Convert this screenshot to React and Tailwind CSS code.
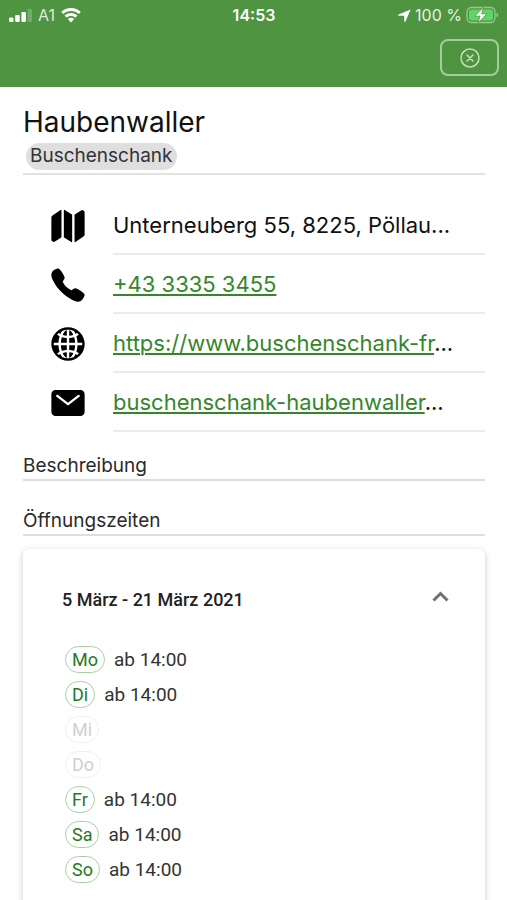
import { IoMap, IoCall, IoGlobe, IoMail, IoCloseCircleOutline } from 'react-icons/io5'

const contacts = [
  { icon: IoMap, label: 'Adresse', text: 'Unterneuberg 55, 8225, Pöllau', more: true },
  { icon: IoCall, label: 'Telefon', text: '+43 3335 3455', href: 'tel:+4333353455' },
  { icon: IoGlobe, label: 'Webseite', text: 'https://www.buschenschank-fr', href: '#web', more: true },
  { icon: IoMail, label: 'E-Mail', text: 'buschenschank-haubenwaller', href: '#mail', more: true }
]

const days = [
  { day: 'Mo', hours: 'ab 14:00' },
  { day: 'Di', hours: 'ab 14:00' },
  { day: 'Mi' },
  { day: 'Do' },
  { day: 'Fr', hours: 'ab 14:00' },
  { day: 'Sa', hours: 'ab 14:00' },
  { day: 'So', hours: 'ab 14:00' }
]

function StatusBar() {
  return (
    <div className="grid grid-cols-3 items-center h-[30px] pl-[9px] pr-2 text-base">
      <div className="flex items-center gap-[6px]">
        <svg width="23" height="13" viewBox="0 0 23 13" fill="#fff">
          <rect x="0" y="8.500" width="4.500" height="4.500" rx="1" />
          <rect x="6.200" y="6" width="4.500" height="7" rx="1" />
          <rect x="12.400" y="3" width="4.500" height="10" rx="1" />
          <rect x="18.500" y="0" width="4.500" height="13" rx="1" opacity=".22" />
        </svg>
        <span className="text-[#dcebd8]">A1</span>
        <svg width="20" height="15" viewBox="0 0 20 15" fill="#fff">
          <path d="M10 0C6.200 0 2.700 1.500.2 3.900L2.200 6C4.200 4.100 7 2.900 10 2.900S15.800 4.100 17.800 6l2-2.100C17.300 1.500 13.800 0 10 0Z" />
          <path d="M10 5C7.500 5 5.200 6 3.500 7.500l2 2.100C6.700 8.500 8.300 7.900 10 7.900s3.300.6 4.500 1.700l2-2.100C14.800 6 12.500 5 10 5Z" />
          <path d="M10 9.800c-1.200 0-2.300.5-3.200 1.200L10 14.500l3.200-3.500c-.9-.7-2-1.200-3.200-1.200Z" />
        </svg>
      </div>
      <span className="text-center font-semibold">14:53</span>
      <div className="flex items-center justify-end gap-1 whitespace-nowrap">
        <svg width="13" height="13" viewBox="0 0 13 13" fill="#fff">
          <path d="M12.600.4.500 5.500c-.6.300-.5 1.200.2 1.200l5.500.1.100 5.500c0 .7.900.8 1.200.2L12.600.4Z" />
        </svg>
        <span className="text-[#e6f2e3]">100 %</span>
        <svg width="33" height="18" viewBox="0 0 33 18">
          <rect x="1" y="1.500" width="28" height="15" rx="4.500" fill="none" stroke="#9dc596" strokeWidth="1.300" />
          <rect x="3" y="3.500" width="24" height="11" rx="2.500" fill="#5fd566" />
          <path d="M30.500 6.500v5c1-.4 1.700-1.400 1.700-2.500s-.7-2.100-1.700-2.500Z" fill="#9dc596" />
          <path d="M17.500 1 8.700 10.200h5.300L12 17l9-9.200h-5.300L17.500 1Z" fill="#fff" stroke="#4f9440" strokeWidth=".8" />
        </svg>
      </div>
    </div>
  )
}

function SectionTitle({ children }) {
  return (
    <h2 className="h-7 border-b-2 border-[#dedede] text-[19px] leading-[26px] text-[#2a2a2a]">
      {children}
    </h2>
  )
}

export default function App() {
  return (
    <div className="h-screen overflow-hidden bg-white font-['Inter','Liberation_Sans',sans-serif]">
      <header className="h-[87px] bg-[#4f9440] text-white">
        <StatusBar />
        <div className="flex justify-end pt-[9px] pr-2">
          <button
            type="button"
            aria-label="Schließen"
            className="flex items-center justify-center w-[59px] h-[37px] rounded-lg border-2 border-[#a5cb9e] text-[#c5dfc0]"
          >
            <IoCloseCircleOutline size={24} />
          </button>
        </div>
      </header>

      <main className="pl-[23px] pr-[22px]">
        <div className="pt-[19px] h-[88px] border-b-2 border-[#e2e2e2]">
          <h1 className="text-[28px] leading-8 text-[#111]">Haubenwaller</h1>
          <span className="inline-block ml-[3px] mt-[5px] h-[27px] px-1 rounded-full bg-[#dfdfdf] text-[19px] leading-[26px] text-[#333]">
            Buschenschank
          </span>
        </div>

        {/* Contact */}
        <ul className="mt-[21px]">
          {contacts.map(({ icon: Icon, label, text, href, more }) => (
            <li key={label} className="flex items-center">
              <span className="w-[90px] pl-[26px]" title={label}>
                <Icon size={38} />
              </span>
              <div className="flex-1 h-[59px] border-b-2 border-[#ebebeb] text-[22px] leading-[59px] text-[#111] whitespace-nowrap">
                {href ? (
                  <a href={href} className="text-[#35862a] underline decoration-2 underline-offset-2">
                    {text}
                  </a>
                ) : (
                  text
                )}
                {more && '...'}
              </div>
            </li>
          ))}
        </ul>

        <div className="flex flex-col gap-[27px] mt-[21px]">
          <SectionTitle>Beschreibung</SectionTitle>
          <SectionTitle>Öffnungszeiten</SectionTitle>
        </div>

        {/* Opening hours */}
        <section className="mt-[13px] pb-10 rounded-md bg-white shadow-[0_2px_6px_rgba(0,0,0,0.22)] font-['Roboto','Liberation_Sans',sans-serif]">
          <button type="button" aria-expanded="true" className="flex items-center justify-between w-full h-[93px] pt-2 pl-[39px] pr-9">
            <span className="text-lg font-medium text-[#222]">5 März - 21 März 2021</span>
            <svg width="17" height="20" viewBox="0 0 17 20" fill="none" stroke="#707070" strokeWidth="3">
              <path d="M1.500 10.500l7-7 7 7" />
            </svg>
          </button>
          <ul className="pl-[42px]">
            {days.map(({ day, hours }) => (
              <li key={day} className="flex items-center gap-[9px] h-[35px] text-lg">
                <span
                  className={
                    hours
                      ? 'h-[27px] px-[6px] rounded-full border border-[#a9d0a3] leading-[26px] text-[#257a1c]'
                      : 'h-[27px] px-[6px] rounded-full border border-[#f0f0f0] leading-[26px] text-[#d0d0d0]'
                  }
                >
                  {day}
                </span>
                {hours && <span className="text-[19px] text-[#333]">{hours}</span>}
              </li>
            ))}
          </ul>
        </section>
      </main>
    </div>
  )
}
